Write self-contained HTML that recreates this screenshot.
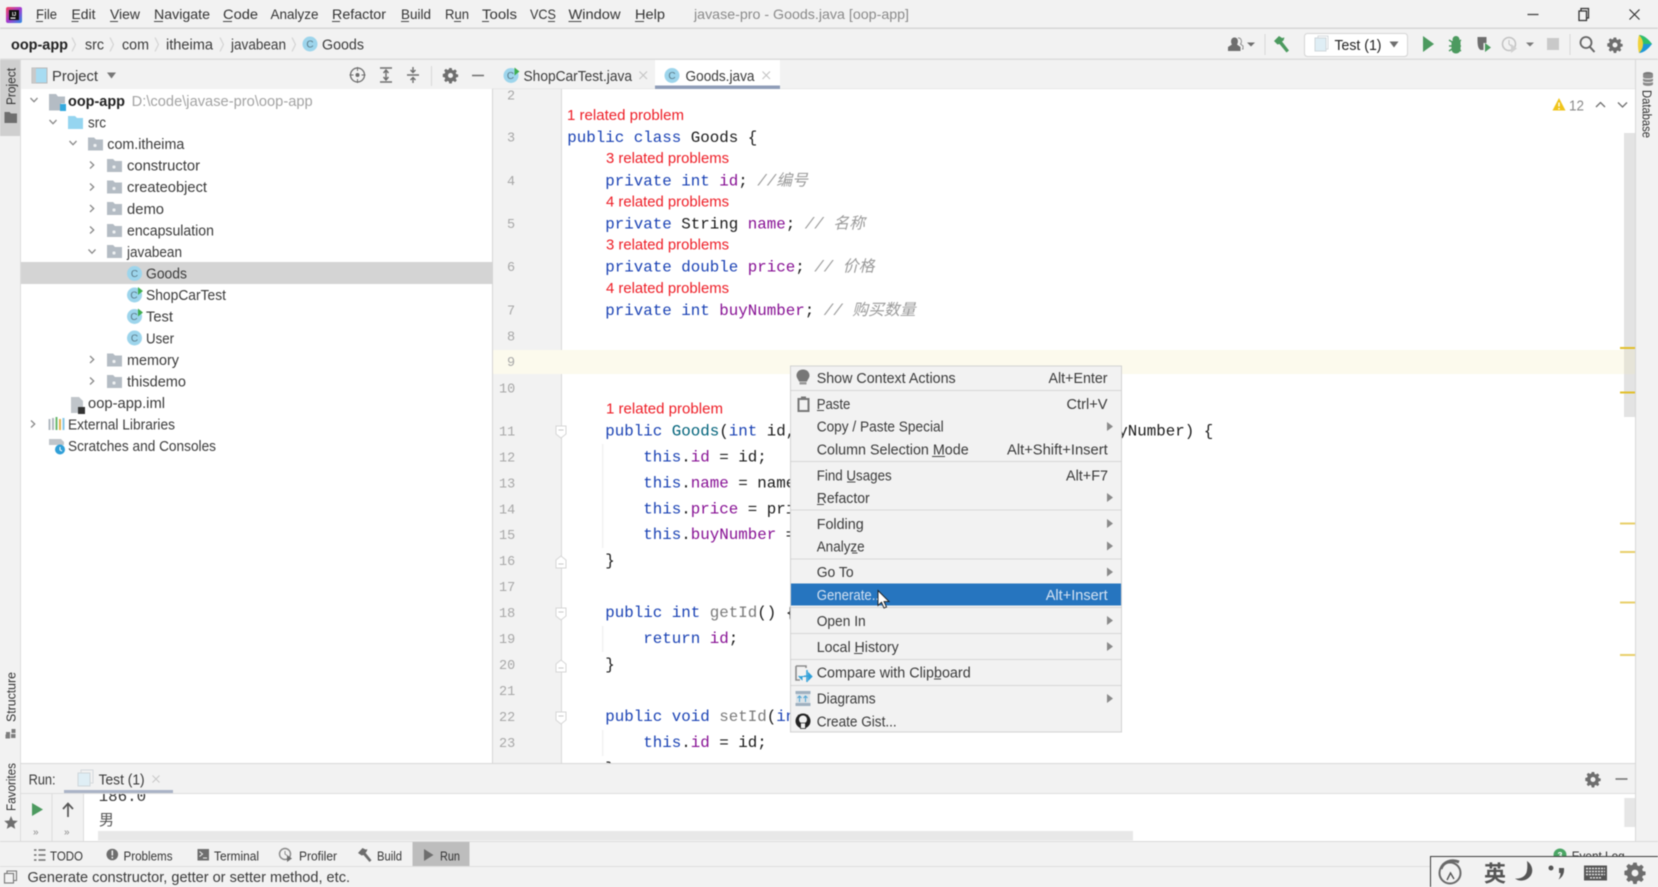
<!DOCTYPE html>
<html lang="en"><head><meta charset="utf-8"><title>javase-pro - Goods.java [oop-app]</title>
<style>
html,body{margin:0;padding:0;width:1658px;height:887px;overflow:hidden;background:#f2f2f2}
svg{display:block;filter:blur(.45px)}
text{font-family:"Liberation Sans","Noto Sans CJK SC",sans-serif;fill:#2e2e2e;white-space:pre}
.m{font-size:14px;fill:#333}
.t{font-size:14.5px;fill:#3a3a3a}
.g{fill:#a3a3a3}
.c{font-family:"Liberation Mono","Noto Sans CJK SC",monospace;font-size:15.83px;fill:#1a1a1a;transform:translateY(-1px)}
.k{fill:#1a42b4}.f{fill:#871094}.d{fill:#00627a}.u{fill:#7a7a7a}
.cm{fill:#9a9a9a;font-style:italic}
.n{font-family:"Liberation Mono",monospace;font-size:13.5px;fill:#a8a8a8;transform:translateY(-1px)}
.r{font-size:14.5px;fill:#ee1c25}
.ci{font-size:10px;fill:#5a7a88;text-anchor:middle}
.sm{font-size:13px;fill:#333}
</style></head><body>
<svg xmlns="http://www.w3.org/2000/svg" width="1658" height="887" viewBox="0 0 1658 887">
<defs>
<linearGradient id="lg" x1="0" y1="0" x2="1" y2="1"><stop offset="0" stop-color="#f5455c"/><stop offset=".5" stop-color="#a43ad0"/><stop offset="1" stop-color="#2a8fe6"/></linearGradient>
<symbol id="fo" viewBox="0 0 15 13" width="15" height="13" overflow="visible"><path d="M0 0h6l2 2h7v11H0z" fill="#b4bcc4"/><circle cx="7" cy="8" r="1.6" fill="#eef0f2"/></symbol>
<symbol id="ch" viewBox="0 0 10 10" width="10" height="10"><path d="M1.5 3l3.5 3.7L8.5 3" fill="none" stroke="#8a8a8a" stroke-width="1.3"/></symbol>
<symbol id="cr" viewBox="0 0 10 10" width="10" height="10"><path d="M3 1.5l3.7 3.5L3 8.5" fill="none" stroke="#8a8a8a" stroke-width="1.3"/></symbol>
<symbol id="fs" viewBox="0 0 12 14" width="12" height="14"><path d="M1 1h10v8l-5 4-5-4z" fill="#fff" stroke="#d6d6d6"/><path d="M3.500 5h5" stroke="#c8c8c8"/></symbol>
<symbol id="fe" viewBox="0 0 12 14" width="12" height="14"><path d="M1 13h10V5L6 1 1 5z" fill="#fff" stroke="#d6d6d6"/><path d="M3.500 9h5" stroke="#c8c8c8"/></symbol>
<symbol id="gr" viewBox="0 0 16 16" width="16" height="16"><path d="M6.700 1h2.600l.4 2.100 1.300.6 1.800-1.200 1.800 1.800-1.200 1.800.6 1.300 2 .4v2.600l-2 .4-.6 1.300 1.200 1.800-1.800 1.800-1.800-1.200-1.300.6-.4 2.100H6.700l-.4-2.100-1.300-.6-1.800 1.200-1.800-1.800 1.200-1.800-.6-1.300-2-.4V7.200l2-.4.6-1.300-1.200-1.800 1.800-1.800L5 3.100l1.300-.6z" transform="translate(.3 -.5) scale(.96)" fill="#6e6e6e"/><circle cx="8" cy="8" r="2.500" fill="#f2f2f2"/></symbol>
</defs>

<rect width="1658" height="887" fill="#f2f2f2"/>

<!-- Title bar -->
<rect x="6" y="7" width="16" height="16" fill="url(#lg)" rx="2"/><rect x="9" y="10" width="10" height="10" fill="#111"/><rect x="10.500" y="17.500" width="5" height="1.200" fill="#fff"/>
<text x="12" y="16" style="font-size:5px;fill:#fff;font-weight:bold">IJ</text>
<g class="menu">
<text class="m" x="36" y="19" textLength="21" lengthAdjust="spacingAndGlyphs">File</text>
<text class="m" x="71.500" y="19" textLength="24" lengthAdjust="spacingAndGlyphs">Edit</text>
<text class="m" x="110" y="19" textLength="30" lengthAdjust="spacingAndGlyphs">View</text>
<text class="m" x="154" y="19" textLength="56" lengthAdjust="spacingAndGlyphs">Navigate</text>
<text class="m" x="223" y="19" textLength="35" lengthAdjust="spacingAndGlyphs">Code</text>
<text class="m" x="270.500" y="19" textLength="48" lengthAdjust="spacingAndGlyphs">Analyze</text>
<text class="m" x="332" y="19" textLength="54" lengthAdjust="spacingAndGlyphs">Refactor</text>
<text class="m" x="401" y="19" textLength="30" lengthAdjust="spacingAndGlyphs">Build</text>
<text class="m" x="445" y="19" textLength="24" lengthAdjust="spacingAndGlyphs">Run</text>
<text class="m" x="482" y="19" textLength="35" lengthAdjust="spacingAndGlyphs">Tools</text>
<text class="m" x="530" y="19" textLength="26" lengthAdjust="spacingAndGlyphs">VCS</text>
<text class="m" x="568.500" y="19" textLength="52" lengthAdjust="spacingAndGlyphs">Window</text>
<text class="m" x="635" y="19" textLength="30" lengthAdjust="spacingAndGlyphs">Help</text>
</g>
<path d="M36 21.500h7M71.500 21.500h7M110 21.500h8M154 21.500h9M223 21.500h9M332 21.500h8M401 21.500h8M454 21.500h7M482 21.500h7M548 21.500h7M568.500 21.500h13M635 21.500h9" stroke="#444" fill="none"/>
<text class="m" x="694" y="19" textLength="215" lengthAdjust="spacingAndGlyphs" style="fill:#8a8a8a">javase-pro - Goods.java [oop-app]</text>
<path d="M1527.500 14.500h11" stroke="#444" stroke-width="1.300"/>
<path d="M1579 11h7.500v9.500H1579zM1581 11V8.500h7.500V18h-2" fill="none" stroke="#333" stroke-width="1.300"/>
<path d="M1629.500 9.500l10 10m0-10l-10 10" stroke="#333" stroke-width="1.200"/>
<rect y="27.500" width="1658" height="1.500" fill="#d6d6d6"/>

<!-- Breadcrumb / toolbar -->
<text class="t" x="11" y="49.500" textLength="57" lengthAdjust="spacingAndGlyphs" style="font-weight:bold;fill:#222">oop-app</text>
<path d="M72 37.500l3.500 7-3.500 7M110 37.500l3.500 7-3.500 7M155 37.500l3.500 7-3.500 7M220 37.500l3.500 7-3.500 7M292 37.500l3.500 7-3.500 7" fill="none" stroke="#cfcfcf"/>
<text class="t" x="85" y="49.500" textLength="19" lengthAdjust="spacingAndGlyphs">src</text>
<text class="t" x="122" y="49.500" textLength="27" lengthAdjust="spacingAndGlyphs">com</text>
<text class="t" x="166" y="49.500" textLength="47" lengthAdjust="spacingAndGlyphs">itheima</text>
<text class="t" x="231" y="49.500" textLength="55" lengthAdjust="spacingAndGlyphs">javabean</text>
<circle cx="310" cy="44" r="7.500" fill="#9dd5ec"/><text class="ci" x="310" y="47.500">C</text>
<text class="t" x="322" y="49.500" textLength="42" lengthAdjust="spacingAndGlyphs">Goods</text>

<!-- right toolbar -->
<g>
<path d="M1228 51v-4l4-2.500c-1.500-2-1.500-7 2.500-7s4 5 2.500 7l3.500 2.500v4z" fill="#6e6e6e"/><path d="M1238 38c3-.5 4.500 3.500 2.500 6l2.500 2v3h-1" fill="none" stroke="#8e8e8e"/>
<path d="M1247 42.500h8l-4 4z" fill="#6e6e6e"/>
<path d="M1265 34v21" stroke="#d8d8d8"/>
<path d="M1274 41l5-5 3 2 2.500-.5-1 3-1.500 1 7 9-2.500 2-7-8.500-2 .5z" fill="#4c9a5f"/>
<rect x="1304.500" y="33.500" width="103" height="23" rx="3" fill="#fff" stroke="#d4d4d4"/>
<rect x="1315" y="38" width="11" height="13" fill="#dfeef5" stroke="#cfd6da"/><path d="M1318 38v-2h10v13h-2" fill="none" stroke="#d5d9dc"/>
<text class="t" x="1334.500" y="50" textLength="47" lengthAdjust="spacingAndGlyphs" style="fill:#222">Test (1)</text>
<path d="M1389.500 41.500h9l-4.500 6z" fill="#6e6e6e"/>
<path d="M1423 36v16l11-8z" fill="#4c9a5f"/>
<path d="M1451.500 41h9v8c0 6-9 6-9 0z" fill="#4c9a5f"/><circle cx="1456" cy="39.500" r="3.500" fill="#4c9a5f"/><path d="M1449 40l3 2m9-2l-3 2m-9 4h3m6 0h3m-12 5l3-2m9 2l-3-2" stroke="#4c9a5f" stroke-width="1.500"/>
<path d="M1477.500 37h9v6h-3v7h-3c-3-2-3-6-3-13z" fill="#6e6e6e"/><path d="M1485 43v9l6-4.500z" fill="#4c9a5f"/>
<circle cx="1509" cy="44" r="6.500" fill="none" stroke="#c2c2c2" stroke-width="1.500"/><path d="M1509 40v4l2 2" stroke="#c2c2c2" fill="none"/><path d="M1511 44v9l6-4.500z" fill="#d0d0d0"/>
<path d="M1526 42.500h8l-4 4z" fill="#7a7a7a"/>
<rect x="1547" y="38" width="12" height="12" fill="#c9c9c9"/>
<path d="M1570 34v21" stroke="#d8d8d8"/>
<circle cx="1586" cy="42.500" r="5.500" fill="none" stroke="#666" stroke-width="1.800"/><path d="M1590 47l4.500 5" stroke="#666" stroke-width="2"/>
<use href="#gr" x="1607" y="37"/>
<path d="M1639 35c5 0 10 5 13 9-3 4-8 9-13 9z" fill="#1d98d8"/><path d="M1639 35c3 3 4 6 4 9l9 0c-3-4-8-9-13-9z" fill="#2fc06b"/><path d="M1639 35c-1.500 5-1.500 13 0 18 3-3 4-6 4-9s-1-6-4-9z" fill="#f0d23c"/>
</g>
<rect y="58.500" width="1658" height="1.500" fill="#dcdcdc"/>

<!-- Left stripe -->
<rect x="0" y="60" width="21" height="76" fill="#cfcfcf"/>
<text class="sm" transform="translate(15.500 105) rotate(-90)" textLength="37" lengthAdjust="spacingAndGlyphs" style="font-size:12.500px">Project</text>
<path d="M4.500 112h5l1.500 1.500h6v9.500H4.500z" fill="#6e6e6e"/>
<text class="sm" transform="translate(15.500 722) rotate(-90)" textLength="50" lengthAdjust="spacingAndGlyphs" style="font-size:12.500px">Structure</text>
<path d="M6 732h4v4H6zM11.500 729h4v4h-4zM11 734h4.500v4H11zM5.500 734.500h4.500v4H5.500z" fill="#7d7d7d"/>
<text class="sm" transform="translate(15.500 811) rotate(-90)" textLength="48" lengthAdjust="spacingAndGlyphs" style="font-size:12.500px">Favorites</text>
<path d="M11 816l1.900 4.500 4.900.4-3.700 3.200 1.100 4.800-4.200-2.500-4.200 2.500 1.100-4.800-3.700-3.200 4.900-.4z" fill="#6e6e6e"/>
<rect x="20" y="60" width="1" height="782" fill="#dcdcdc"/>

<!-- Project panel -->
<rect x="21" y="60" width="471" height="29" fill="#f2f2f2"/>
<rect x="32" y="68" width="15" height="15" fill="#a7dcf2" stroke="#b7b7b7"/><rect x="32" y="68" width="4" height="15" fill="#c9c9c9"/>
<text class="t" x="52" y="81" textLength="46" lengthAdjust="spacingAndGlyphs">Project</text>
<path d="M107 72.500h9l-4.500 6z" fill="#777"/>
<circle cx="357.500" cy="75" r="7" fill="none" stroke="#6e6e6e" stroke-width="1.300"/><circle cx="357.500" cy="75" r="2" fill="#6e6e6e"/><path d="M357.500 67v4m0 8v4m-8-8h4m8 0h4" stroke="#6e6e6e"/>
<path d="M380 68h12M380 82h12M386 70v10M383.500 73l2.500-3 2.500 3M383.500 77l2.500 3 2.500-3" fill="none" stroke="#6e6e6e" stroke-width="1.400"/>
<path d="M407 75h12M413 67v5M413 83v-5M410.500 70l2.500 2.500 2.500-2.500M410.500 80l2.500-2.500 2.500 2.500" fill="none" stroke="#6e6e6e" stroke-width="1.400"/>
<path d="M431.500 66v20" stroke="#d8d8d8"/>
<use href="#gr" x="442.500" y="67.500"/>
<path d="M472 75.500h12" stroke="#6e6e6e" stroke-width="1.500"/>
<rect x="21" y="89" width="471" height="674" fill="#fff"/>
<rect x="21" y="262" width="471" height="22" fill="#d4d4d4"/>
<!-- tree -->
<use href="#ch" x="29" y="95"/>
<path d="M49 94h7l2 2.500h7v7h-4v7H49z" fill="#b4bcc4"/><rect x="60" y="104" width="6" height="7" fill="#34a9de"/>
<text class="t" x="68" y="106" textLength="57" lengthAdjust="spacingAndGlyphs" style="font-weight:bold;fill:#222">oop-app</text>
<text class="t g" x="131.700" y="106" textLength="181" lengthAdjust="spacingAndGlyphs">D:\code\javase-pro\oop-app</text>
<use href="#ch" x="48" y="117"/>
<path d="M68 116h7l2 2h6v11H68z" fill="#95d5f0"/>
<text class="t" x="88" y="127.500" textLength="18" lengthAdjust="spacingAndGlyphs">src</text>
<use href="#ch" x="68" y="138"/>
<use href="#fo" x="88" y="137.500"/>
<text class="t" x="107.300" y="149" textLength="77" lengthAdjust="spacingAndGlyphs">com.itheima</text>
<use href="#cr" x="87" y="160"/><use href="#fo" x="107" y="159"/>
<text class="t" x="127" y="170.500" textLength="73" lengthAdjust="spacingAndGlyphs">constructor</text>
<use href="#cr" x="87" y="182"/><use href="#fo" x="107" y="180.500"/>
<text class="t" x="127" y="192" textLength="80" lengthAdjust="spacingAndGlyphs">createobject</text>
<use href="#cr" x="87" y="203.500"/><use href="#fo" x="107" y="202"/>
<text class="t" x="127" y="214" textLength="37" lengthAdjust="spacingAndGlyphs">demo</text>
<use href="#cr" x="87" y="225"/><use href="#fo" x="107" y="224"/>
<text class="t" x="127" y="235.500" textLength="87" lengthAdjust="spacingAndGlyphs">encapsulation</text>
<use href="#ch" x="87" y="246.500"/><use href="#fo" x="107" y="245"/>
<text class="t" x="127" y="257" textLength="55" lengthAdjust="spacingAndGlyphs">javabean</text>
<circle cx="134.500" cy="273.500" r="7.500" fill="#9dd5ec"/><text class="ci" x="134.500" y="277">C</text>
<text class="t" x="146" y="278.500" textLength="41" lengthAdjust="spacingAndGlyphs">Goods</text>
<circle cx="134.500" cy="295" r="7.500" fill="#9dd5ec"/><text class="ci" x="134" y="298.500">C</text><path d="M138 287v8l5-4z" fill="#3fae4f"/>
<text class="t" x="146" y="300" textLength="80" lengthAdjust="spacingAndGlyphs">ShopCarTest</text>
<circle cx="134.500" cy="316.500" r="7.500" fill="#9dd5ec"/><text class="ci" x="134" y="320">C</text><path d="M138 308.500v8l5-4z" fill="#3fae4f"/>
<text class="t" x="146" y="321.500" textLength="27" lengthAdjust="spacingAndGlyphs">Test</text>
<circle cx="134.500" cy="338" r="7.500" fill="#9dd5ec"/><text class="ci" x="134.500" y="341.500">C</text>
<text class="t" x="146" y="343.500" textLength="28" lengthAdjust="spacingAndGlyphs">User</text>
<use href="#cr" x="87" y="354.500"/><use href="#fo" x="107" y="353.500"/>
<text class="t" x="127" y="365" textLength="52" lengthAdjust="spacingAndGlyphs">memory</text>
<use href="#cr" x="87" y="376"/><use href="#fo" x="107" y="375"/>
<text class="t" x="127" y="386.500" textLength="59" lengthAdjust="spacingAndGlyphs">thisdemo</text>
<path d="M71 397h8l4 4v8h-3v4h-9z" fill="#c0c5ca"/><rect x="78" y="407" width="7" height="7" fill="#333"/>
<text class="t" x="88" y="408" textLength="77" lengthAdjust="spacingAndGlyphs">oop-app.iml</text>
<use href="#cr" x="28" y="419"/>
<path d="M49.500 419v11M53 418v12" stroke="#b0b8c0" stroke-width="2"/><path d="M56.500 417v13" stroke="#6ab86e" stroke-width="2"/><path d="M60 419v11" stroke="#e4b24c" stroke-width="2"/><path d="M63.500 418v12" stroke="#84c6e6" stroke-width="2"/>
<text class="t" x="68" y="429.500" textLength="107" lengthAdjust="spacingAndGlyphs">External Libraries</text>
<path d="M49 439h12l3 3v3h-15z" fill="#c0c5ca"/><circle cx="60" cy="449.500" r="5" fill="#2f9fd8"/><path d="M60 447v3l2 1" stroke="#fff" fill="none"/>
<text class="t" x="68" y="451" textLength="148" lengthAdjust="spacingAndGlyphs">Scratches and Consoles</text>

<!-- Tabs -->
<rect x="492" y="60" width="1143" height="29" fill="#f2f2f2"/>
<rect x="655" y="60" width="125" height="26" fill="#fff"/>
<rect x="655" y="85.500" width="125" height="3.500" fill="#8f9db8"/>
<rect x="492" y="88.500" width="163" height="1" fill="#dcdcdc"/><rect x="780" y="88.500" width="855" height="1" fill="#dcdcdc"/>
<circle cx="511" cy="75.500" r="7.500" fill="#9dd5ec"/><text class="ci" x="510.500" y="79">C</text><path d="M514.500 67.500v8l5-4z" fill="#3fae4f"/>
<text class="t" x="523.500" y="81" textLength="108.500" lengthAdjust="spacingAndGlyphs">ShopCarTest.java</text>
<path d="M639.500 71.500l7.500 7.500m0-7.500l-7.500 7.500" stroke="#c4c4c4" stroke-width="1.100"/>
<circle cx="672" cy="75.500" r="7.500" fill="#9dd5ec"/><text class="ci" x="672" y="79">C</text>
<text class="t" x="685.500" y="81" textLength="69" lengthAdjust="spacingAndGlyphs">Goods.java</text>
<path d="M762.500 71.500l7.500 7.500m0-7.500l-7.500 7.500" stroke="#c4c4c4" stroke-width="1.100"/>

<!-- Editor -->
<rect x="493" y="89" width="1142" height="674" fill="#fff"/>
<rect x="493" y="89" width="68" height="674" fill="#f2f2f2"/>
<rect x="561" y="89" width="1" height="674" fill="#d8d8d8"/>
<rect x="492" y="89" width="1" height="674" fill="#d4d4d4"/>
<rect x="493" y="350" width="1131" height="24" fill="#fcfaed"/>

<!-- line numbers -->
<g class="ln">
<text class="n" x="507" y="100.500">2</text><text class="n" x="507" y="142.500">3</text><text class="n" x="507" y="186">4</text><text class="n" x="507" y="229">5</text><text class="n" x="507" y="272">6</text><text class="n" x="507" y="315.500">7</text><text class="n" x="507" y="341.500">8</text><text class="n" x="507" y="367">9</text>
<text class="n" x="499" y="393.500">10</text><text class="n" x="499" y="436.500">11</text><text class="n" x="499" y="462.500">12</text><text class="n" x="499" y="488.500">13</text><text class="n" x="499" y="514.500">14</text><text class="n" x="499" y="540">15</text><text class="n" x="499" y="566">16</text><text class="n" x="499" y="592">17</text><text class="n" x="499" y="618">18</text><text class="n" x="499" y="644">19</text><text class="n" x="499" y="670">20</text><text class="n" x="499" y="696">21</text><text class="n" x="499" y="722">22</text><text class="n" x="499" y="748">23</text>
</g>
<use href="#fs" x="555" y="425"/><use href="#fe" x="555" y="555"/><use href="#fs" x="555" y="607"/><use href="#fe" x="555" y="659"/><use href="#fs" x="555" y="711"/>
<path d="M602.700 444v104M602.700 626v26M602.700 730v26" stroke="#ececec"/>

<!-- code -->
<text class="r" x="567" y="120" textLength="117" lengthAdjust="spacingAndGlyphs">1 related problem</text>
<text class="c" x="567.300" y="143"><tspan class="k">public class </tspan>Goods {</text>
<text class="r" x="606" y="163" textLength="123" lengthAdjust="spacingAndGlyphs">3 related problems</text>
<text class="c" x="605.300" y="186.500"><tspan class="k">private int </tspan><tspan class="f">id</tspan>; <tspan class="cm">//编号</tspan></text>
<text class="r" x="606" y="206.500" textLength="123" lengthAdjust="spacingAndGlyphs">4 related problems</text>
<text class="c" x="605.300" y="229.500"><tspan class="k">private </tspan>String <tspan class="f">name</tspan>; <tspan class="cm">// 名称</tspan></text>
<text class="r" x="606" y="249.500" textLength="123" lengthAdjust="spacingAndGlyphs">3 related problems</text>
<text class="c" x="605.300" y="272.500"><tspan class="k">private double </tspan><tspan class="f">price</tspan>; <tspan class="cm">// 价格</tspan></text>
<text class="r" x="606" y="293" textLength="123" lengthAdjust="spacingAndGlyphs">4 related problems</text>
<text class="c" x="605.300" y="316"><tspan class="k">private int </tspan><tspan class="f">buyNumber</tspan>; <tspan class="cm">// 购买数量</tspan></text>
<text class="r" x="606" y="413.500" textLength="117" lengthAdjust="spacingAndGlyphs">1 related problem</text>
<text class="c" x="605.300" y="436.500"><tspan class="k">public </tspan><tspan class="d">Goods</tspan>(<tspan class="k">int </tspan>id, String name, <tspan class="k">double </tspan>price, <tspan class="k">int </tspan>buyNumber) {</text>
<text class="c" x="643.300" y="462.500"><tspan class="k">this</tspan>.<tspan class="f">id</tspan> = id;</text>
<text class="c" x="643.300" y="488.500"><tspan class="k">this</tspan>.<tspan class="f">name</tspan> = name;</text>
<text class="c" x="643.300" y="514.500"><tspan class="k">this</tspan>.<tspan class="f">price</tspan> = price;</text>
<text class="c" x="643.300" y="540"><tspan class="k">this</tspan>.<tspan class="f">buyNumber</tspan> = buyNumber;</text>
<text class="c" x="605.300" y="566">}</text>
<text class="c" x="605.300" y="618"><tspan class="k">public int </tspan><tspan class="u">getId</tspan>() {</text>
<text class="c" x="643.300" y="644"><tspan class="k">return </tspan><tspan class="f">id</tspan>;</text>
<text class="c" x="605.300" y="670">}</text>
<text class="c" x="605.300" y="722"><tspan class="k">public void </tspan><tspan class="u">setId</tspan>(<tspan class="k">int </tspan>id) {</text>
<text class="c" x="643.300" y="748"><tspan class="k">this</tspan>.<tspan class="f">id</tspan> = id;</text>
<text class="c" x="605.300" y="774">}</text>

<!-- warning & scrollbar -->
<path d="M1559 98l6.500 12.500h-13z" fill="#f0c419"/><path d="M1559 102.500v4m0 1.500v1.500" stroke="#fff" stroke-width="1.400"/>
<text class="t" x="1569" y="110.500" textLength="15" lengthAdjust="spacingAndGlyphs" style="fill:#8a8a8a">12</text>
<path d="M1596 107l4.500-4.500 4.500 4.500M1618 102.500l4.500 4.500 4.500-4.500" fill="none" stroke="#6e6e6e" stroke-width="1.300"/>
<rect x="1624" y="133" width="11" height="284" fill="#e3e3e3"/>
<rect x="1624" y="350" width="11" height="24" fill="#e6e4d8"/>
<rect x="1620" y="347" width="15" height="2" fill="#e2bf2a"/>
<rect x="1620" y="391.500" width="15" height="2" fill="#e2bf2a"/>
<rect x="1620" y="522.500" width="15" height="2" fill="#e8cf6a"/>
<rect x="1620" y="551" width="15" height="2" fill="#e8cf6a"/>
<rect x="1620" y="601.500" width="15" height="2" fill="#e8cf6a"/>
<rect x="1620" y="654" width="15" height="2" fill="#e8cf6a"/>

<!-- right stripe -->
<rect x="1635" y="60" width="23" height="782" fill="#f2f2f2"/>
<rect x="1635" y="60" width="1" height="782" fill="#d8d8d8"/>
<ellipse cx="1648" cy="74" rx="5" ry="2" fill="#777"/><path d="M1643 74v10c0 2.500 10 2.500 10 0V74" fill="#8a8a8a"/><path d="M1643 77.500c0 2 10 2 10 0M1643 81c0 2 10 2 10 0" stroke="#f2f2f2" fill="none"/>
<text class="sm" transform="translate(1642.500 90) rotate(90)" textLength="48" lengthAdjust="spacingAndGlyphs" style="font-size:12.500px">Database</text>

<!-- Context menu -->
<rect x="790.500" y="366" width="331" height="366" fill="#f2f2f2" stroke="#d2d2d2"/>
<path d="M791 390.500h330M791 461.500h330M791 510h330M791 559h330M791 607.500h330M791 633.500h330M791 659.500h330M791 685.500h330" stroke="#d6d6d6"/>
<rect x="791" y="583.500" width="330" height="22" fill="#2675bf"/>
<g>
<path d="M803 369.500c4 0 6.500 2.800 6.500 6 0 2.500-2 4-2.500 6h-8c-.5-2-2.500-3.500-2.500-6 0-3.200 2.500-6 6.500-6z" fill="#777"/><rect x="799.500" y="382" width="7" height="2.500" fill="#999"/>
<text class="t" x="816.700" y="383" textLength="139" lengthAdjust="spacingAndGlyphs">Show Context Actions</text>
<text class="t" x="1048.500" y="383" textLength="59" lengthAdjust="spacingAndGlyphs">Alt+Enter</text>
<path d="M798.500 399h10v12h-10z" fill="none" stroke="#777" stroke-width="2"/><rect x="801" y="396.500" width="5" height="3" fill="#777"/>
<text class="t" x="816.700" y="409" textLength="33.700" lengthAdjust="spacingAndGlyphs">Paste</text>
<text class="t" x="1066.500" y="409" textLength="41" lengthAdjust="spacingAndGlyphs">Ctrl+V</text>
<text class="t" x="816.700" y="431.500" textLength="127" lengthAdjust="spacingAndGlyphs">Copy / Paste Special</text>
<text class="t" x="816.700" y="454.500" textLength="152" lengthAdjust="spacingAndGlyphs">Column Selection Mode</text>
<text class="t" x="1007" y="454.500" textLength="100.700" lengthAdjust="spacingAndGlyphs">Alt+Shift+Insert</text>
<text class="t" x="816.700" y="480.500" textLength="75" lengthAdjust="spacingAndGlyphs">Find Usages</text>
<text class="t" x="1066" y="480.500" textLength="42" lengthAdjust="spacingAndGlyphs">Alt+F7</text>
<text class="t" x="816.700" y="503" textLength="53" lengthAdjust="spacingAndGlyphs">Refactor</text>
<text class="t" x="816.700" y="529" textLength="47" lengthAdjust="spacingAndGlyphs">Folding</text>
<text class="t" x="816.700" y="551.500" textLength="48" lengthAdjust="spacingAndGlyphs">Analyze</text>
<text class="t" x="816.700" y="577" textLength="37" lengthAdjust="spacingAndGlyphs">Go To</text>
<text class="t" x="816.700" y="600" textLength="66" lengthAdjust="spacingAndGlyphs" style="fill:#d4e2f2">Generate...</text>
<text class="t" x="1045.700" y="600" textLength="62" lengthAdjust="spacingAndGlyphs" style="fill:#d4e2f2">Alt+Insert</text>
<text class="t" x="816.700" y="626" textLength="49" lengthAdjust="spacingAndGlyphs">Open In</text>
<text class="t" x="816.700" y="652" textLength="82" lengthAdjust="spacingAndGlyphs">Local History</text>
<text class="t" x="816.700" y="677.500" textLength="154" lengthAdjust="spacingAndGlyphs">Compare with Clipboard</text>
<path d="M796 666h10v2M796 666v14h4" fill="none" stroke="#8b8b8b" stroke-width="1.600"/><path d="M804 676h4.500v-3l3.500 3.500-3.500 3.500v-3M806 676.500l-4 0v3l-3.500-3.500" fill="#2f9fd8" stroke="#2f9fd8"/><path d="M807 670v12" stroke="#2f9fd8" stroke-width="1.500"/>
<text class="t" x="816.700" y="703.500" textLength="59" lengthAdjust="spacingAndGlyphs">Diagrams</text>
<rect x="795.500" y="691" width="15" height="3" fill="#9fb0bf"/><rect x="795.500" y="703" width="15" height="3" fill="#9fb0bf"/><rect x="796" y="694" width="14" height="9" fill="#dbe3e8"/><path d="M799.500 702v-6M797.500 698l2-2 2 2M805.500 702v-6M803.500 698l2-2 2 2" stroke="#4da3d4" fill="none"/>
<text class="t" x="816.700" y="726.500" textLength="80" lengthAdjust="spacingAndGlyphs">Create Gist...</text>
<circle cx="803" cy="721" r="7.500" fill="#222"/><circle cx="803" cy="719.500" r="4" fill="#f2f2f2"/><path d="M798 715l2 1.500M808 715l-2 1.500M800.500 723h5v5.500h-5z" fill="#f2f2f2" stroke="#222" stroke-width=".8"/>
</g>
<path d="M817 410.500h7M932 456.500h13M847 482h8.500M817 504.500h7M852 553h5.500M854 653.500h8.500M934 679h7" stroke="#444" fill="none"/>
<path d="M1107 422l6 4.500-6 4.500zM1107 493l6 4.500-6 4.500zM1107 519l6 4.500-6 4.500zM1107 541.500l6 4.500-6 4.500zM1107 567.500l6 4.500-6 4.500zM1107 616l6 4.500-6 4.500zM1107 642l6 4.500-6 4.500zM1107 694l6 4.500-6 4.500z" fill="#8a8a8a"/>
<path d="M878 590.500v15l3.500-3.200 2.500 5.700 2.500-1-2.500-5.400h5z" fill="#fff" stroke="#1c1c1c" stroke-width=".9"/>

<!-- Run panel content -->
<rect x="21" y="793" width="1614" height="48.500" fill="#fff"/>
<text class="c" x="98.600" y="802" style="fill:#333">186.0</text>
<text class="c" x="99" y="826" style="fill:#555;font-size:15px">男</text>
<rect x="98" y="831" width="1035" height="9.500" fill="#e8e8e8"/>
<rect x="1624.300" y="798" width="10.700" height="29" fill="#e6e6e6"/>
<rect x="21" y="793" width="63" height="48.500" fill="#f2f2f2"/>
<path d="M52 793v48M83.500 793v48" stroke="#dcdcdc"/>
<path d="M32 803v13l11-6.500z" fill="#4c9a5f"/>
<path d="M68 817v-13M63 809l5-5.500 5 5.500" fill="none" stroke="#555" stroke-width="1.700"/>
<text x="33" y="835" style="font-size:10px;fill:#888">»</text><text x="64" y="835" style="font-size:10px;fill:#888">»</text>

<!-- Run header -->
<rect x="21" y="763.500" width="1614" height="29.500" fill="#f2f2f2"/>
<rect x="21" y="763" width="1614" height="1" fill="#d8d8d8"/>
<rect x="21" y="793" width="1614" height="1" fill="#dedede"/>
<text class="t" x="28.600" y="784.500" textLength="27" lengthAdjust="spacingAndGlyphs">Run:</text>
<rect x="78" y="773" width="12" height="13" fill="#dfeef5" stroke="#cfd6da"/><path d="M81 773v-3h12v13h-3" fill="none" stroke="#d5d9dc"/>
<text class="t" x="98.600" y="784.500" textLength="46" lengthAdjust="spacingAndGlyphs">Test (1)</text>
<path d="M152.500 775.500l7 7m0-7l-7 7" stroke="#c8c8c8" stroke-width="1"/>
<rect x="64" y="790" width="109" height="3" fill="#aab3c6"/>
<use href="#gr" x="1585" y="771.500"/>
<path d="M1615.500 779h12" stroke="#6e6e6e" stroke-width="1.500"/>

<!-- Bottom stripe -->
<rect y="841" width="1658" height="25" fill="#f2f2f2"/>
<rect y="841" width="1658" height="1" fill="#dadada"/>
<rect x="412.500" y="842" width="57" height="24" fill="#bdbdbd"/>
<path d="M34 850h2.500M34 855h2.500M34 860h2.500M38.500 850h7M38.500 855h7M38.500 860h7" stroke="#6e6e6e" stroke-width="1.600"/>
<text class="sm" x="50" y="860.500" textLength="33" lengthAdjust="spacingAndGlyphs">TODO</text>
<circle cx="112.300" cy="854.500" r="5.800" fill="#6e6e6e"/><path d="M112.300 850.500v5m0 1.300v1.700" stroke="#f2f2f2" stroke-width="1.500"/>
<text class="sm" x="123.500" y="860.500" textLength="49" lengthAdjust="spacingAndGlyphs">Problems</text>
<rect x="197.500" y="849" width="11.500" height="11.500" fill="#6e6e6e"/><path d="M199.500 851.500l3 2.500-3 2.500M203 858h4" stroke="#f2f2f2" fill="none"/>
<text class="sm" x="214" y="860.500" textLength="45" lengthAdjust="spacingAndGlyphs">Terminal</text>
<circle cx="285" cy="854" r="5.500" fill="none" stroke="#8a8a8a" stroke-width="1.400"/><path d="M285 851v3l2 1.500" stroke="#8a8a8a" fill="none"/><path d="M287 855v7l5-3.500z" fill="#6e6e6e"/>
<text class="sm" x="299" y="860.500" textLength="38" lengthAdjust="spacingAndGlyphs">Profiler</text>
<path d="M358 853l4.500-5 3 1.500 2-.3-1 2.500-1 1 6 7.500-2 1.800-6-7-1.800.5z" fill="#6e6e6e"/>
<text class="sm" x="377" y="860.500" textLength="25" lengthAdjust="spacingAndGlyphs">Build</text>
<path d="M424 849v12l9.500-6z" fill="#6e6e6e"/>
<text class="sm" x="440" y="860.500" textLength="20" lengthAdjust="spacingAndGlyphs">Run</text>
<circle cx="1560" cy="855" r="6.500" fill="#4aa564"/><text x="1560" y="858.500" style="font-size:9px;fill:#fff;text-anchor:middle;font-weight:bold">3</text>
<text class="sm" x="1571.700" y="860.500" textLength="53" lengthAdjust="spacingAndGlyphs" style="fill:#333">Event Log</text>

<!-- Status bar -->
<rect y="866" width="1658" height="21" fill="#f2f2f2"/>
<rect y="866" width="1430" height="1" fill="#dedede"/>
<rect x="4.500" y="873.500" width="9" height="9.500" fill="none" stroke="#777" stroke-width="1.100"/><path d="M7 873.500v-2.500h9.500v9.500h-3" fill="none" stroke="#777" stroke-width="1.100"/>
<text class="t" x="27.500" y="882" textLength="322.500" lengthAdjust="spacingAndGlyphs">Generate constructor, getter or setter method, etc.</text>

<!-- IME bar -->
<rect x="1430.500" y="856.500" width="228" height="31" fill="#f2f2f2" stroke="#3a3a3a"/>
<circle cx="1450" cy="873" r="10.500" fill="none" stroke="#6a6a6a" stroke-width="2"/><path d="M1441 869c2-7 10-10 18-7" fill="none" stroke="#6a6a6a" stroke-width="3"/><path d="M1447 880l3.500-7 3.500 6" fill="none" stroke="#555" stroke-width="1.400"/>
<text x="1484" y="881.500" style="font-size:22px;font-weight:bold;fill:#555">英</text>
<path d="M1527 861c7 5 7 14 0 18-4 2.500-9 2-12-.5 6 .5 10-2 11.500-6 1-3.500 1-8 .5-11.500z" fill="#555"/>
<circle cx="1551" cy="868" r="2.500" fill="#555"/><path d="M1559 868h5c.5 4.500-1 9-5.500 11.500 1.500-2.500 2-4.500 2-6.500H1559z" fill="#555"/>
<rect x="1584" y="865.500" width="23" height="15" fill="#555"/><path d="M1586 868.500h19M1586 871.500h19M1586 874.500h19M1590 877.800h11" stroke="#e8e8e8" stroke-width="1.400" stroke-dasharray="2 1"/>
<use href="#gr" x="1624" y="862" width="22" height="22"/>
</svg>
</body></html>
